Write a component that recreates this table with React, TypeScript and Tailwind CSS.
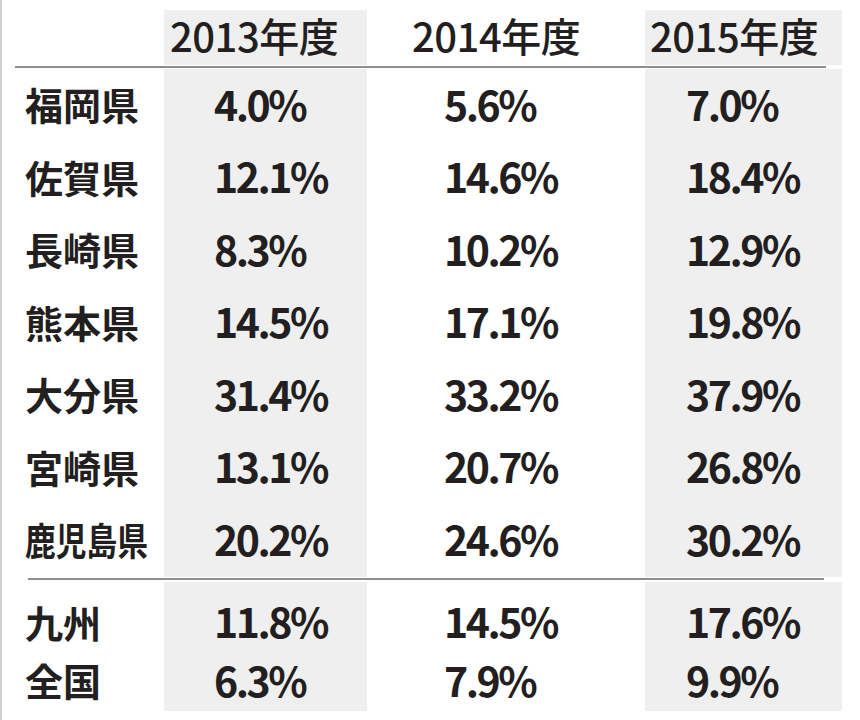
const rows = [
  { label: '福岡県', v: ['4.0%', '5.6%', '7.0%'] },
  { label: '佐賀県', v: ['12.1%', '14.6%', '18.4%'] },
  { label: '長崎県', v: ['8.3%', '10.2%', '12.9%'] },
  { label: '熊本県', v: ['14.5%', '17.1%', '19.8%'] },
  { label: '大分県', v: ['31.4%', '33.2%', '37.9%'] },
  { label: '宮崎県', v: ['13.1%', '20.7%', '26.8%'] },
  { label: '鹿児島県', v: ['20.2%', '24.6%', '30.2%'] },
];

const num = 'text-[41px] font-bold tracking-[-2.5px] pb-[4px]';

const Row = ({ label, v, className, pad = '' }: { label: string; v: string[]; className: string; pad?: string }) => (
  <div className={`grid grid-cols-[162px_203px_278px_197px] ${className}`}>
    <div className={`flex items-center pl-[23px] pb-[2px] text-[38px] font-bold whitespace-nowrap ${pad}`}>
      {label.length > 3 ? <span className="inline-block origin-left scale-x-[0.81]">{label}</span> : label}
    </div>
    <div className={`flex items-center bg-[#efefef] pl-[50px] ${num} ${pad}`}>{v[0]}</div>
    <div className={`flex items-center pl-[77px] ${num} ${pad}`}>{v[1]}</div>
    <div className={`flex items-center bg-[#efefef] pl-[41px] ${num} ${pad}`}>{v[2]}</div>
  </div>
);

export default function App() {
  return (
    <div className="w-[860px] h-[720px] bg-white border-l-2 border-[#cfcfcf] text-[#231f20] leading-none font-['Noto_Sans_CJK_JP',sans-serif]">
      <div className="h-[10px]" />

      {/* header */}
      <div className="grid grid-cols-[162px_203px_278px_197px] h-[55px] text-[40px] font-medium tracking-[-0.5px]">
        <div />
        <div className="flex items-center bg-[#efefef] pl-[6px] pb-[5px]">2013年度</div>
        <div className="flex items-center pl-[45px] pb-[5px]">2014年度</div>
        <div className="flex items-center bg-[#efefef] pl-[5px] pb-[5px]">2015年度</div>
      </div>
      <div className="h-[4px] flex items-center">
        <div className="ml-[13px] w-[811px] h-[2px] bg-[#8f8f8f]" />
      </div>

      {rows.map((r) => (
        <Row key={r.label} label={r.label} v={r.v} className="h-[72.5px]" />
      ))}

      <div className="h-[5px] flex items-center">
        <div className="ml-[26px] w-[796px] h-[2px] bg-[#8f8f8f]" />
      </div>

      <Row label="九州" v={['11.8%', '14.5%', '17.6%']} className="h-[70px]" pad="pt-[12px]" />
      <Row label="全国" v={['6.3%', '7.9%', '9.9%']} className="h-[59px]" />
    </div>
  );
}
